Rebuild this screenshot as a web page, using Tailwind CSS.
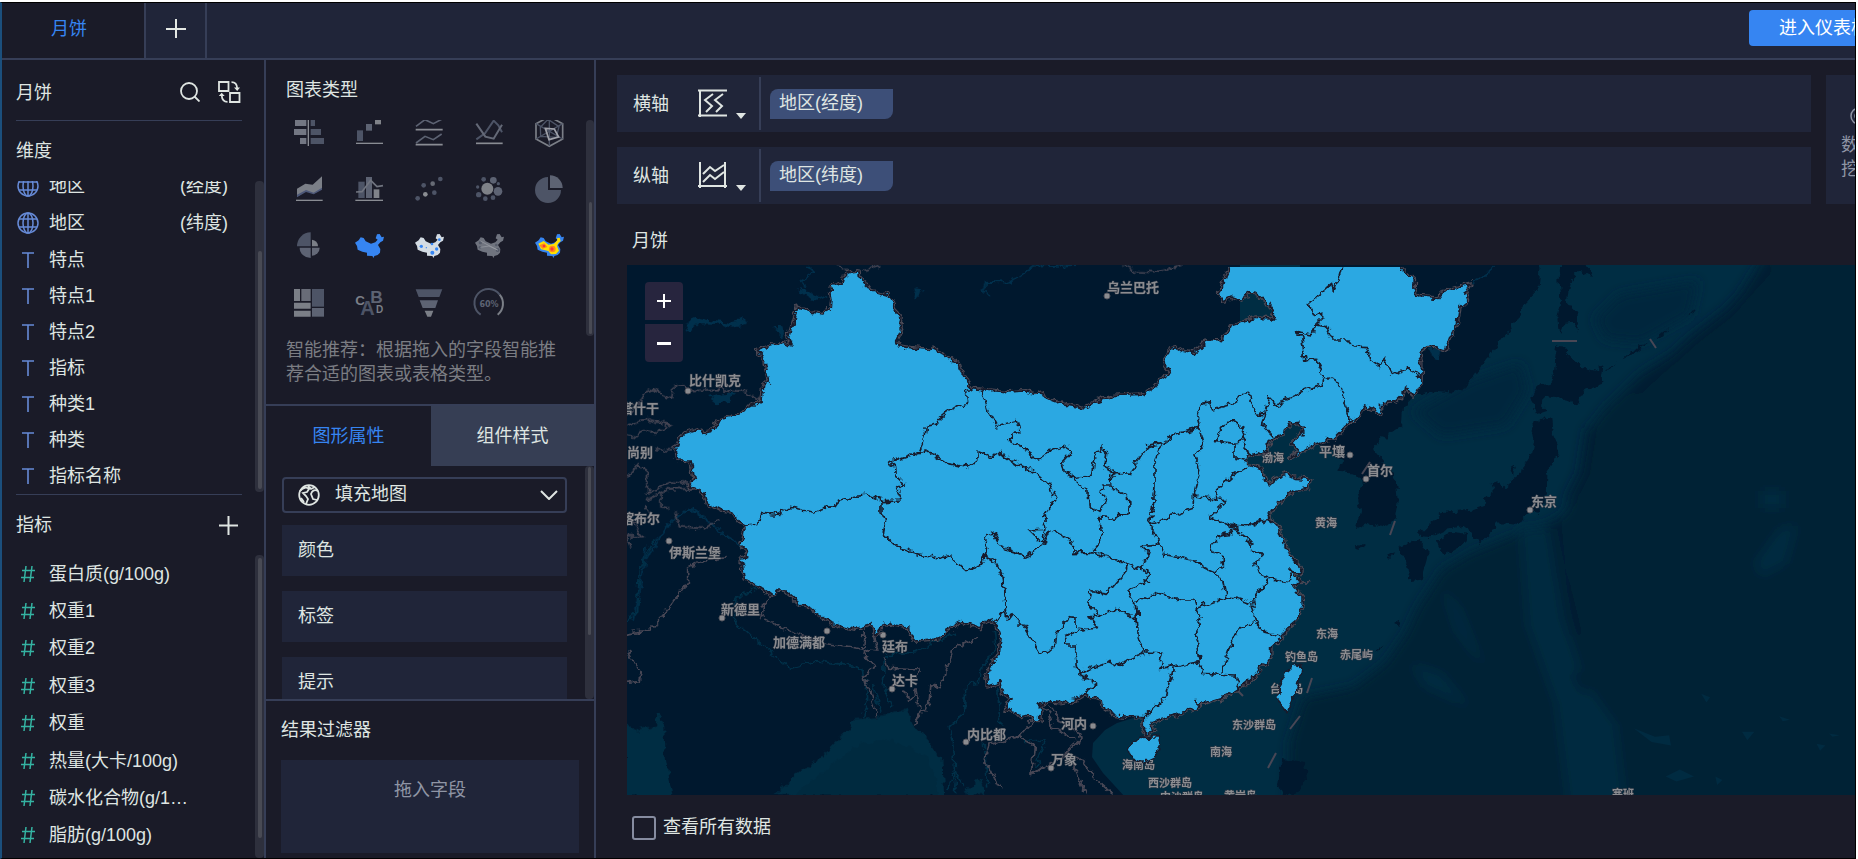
<!DOCTYPE html>
<html lang="zh-CN">
<head>
<meta charset="utf-8">
<title>月饼</title>
<script src="https://cdn.jsdelivr.net/npm/@tailwindcss/browser@4"></script>
</head>
<body class="h-screen overflow-hidden bg-white pt-[2px] pr-[2px] font-['Liberation_Sans','Noto_Sans_CJK_SC',sans-serif] text-[18px] leading-6 text-[#dfe5e2]">
<div class="flex h-full flex-col overflow-hidden border-y border-r border-l-2 border-black border-l-[#1b4f7c] bg-[#1a1b28]">

<header class="flex h-[57px] shrink-0 border-b-2 border-[#363e57] bg-[#202539]">
  <button class="w-[144px] shrink-0 border-r-2 border-[#363e57] bg-[#1a1b28] pr-2 pb-1 text-[#3685f2]">月饼</button>
  <button aria-label="新建" class="flex w-[61px] shrink-0 items-center justify-center border-r-2 border-[#363e57] pb-1">
    <svg class="size-5" viewBox="0 0 20 20" stroke="#e4e8e4" stroke-width="2"><path d="M0 10H20M10 0V19"/></svg>
  </button>
  <button class="mt-[7px] -mr-11 ml-auto h-9 w-[150px] shrink-0 rounded-sm bg-[#3685f2] text-white">进入仪表板</button>
</header>

<div class="flex min-h-0 flex-1">

<!-- Fields -->
<aside class="flex w-[264px] shrink-0 flex-col border-r-2 border-[#363e57]">
  <div class="mr-[22px] ml-[14px] flex h-[61px] shrink-0 items-center border-b border-[#363e57] pt-1">
    <h2 class="pt-px">月饼</h2>
    <button aria-label="搜索" class="ml-auto"><svg class="size-5" viewBox="0 0 20 20" fill="none" stroke="#dfe5e2" stroke-width="1.8"><circle cx="9" cy="9" r="8"/><path d="M14.5 14.5 19.5 19.5"/></svg></button>
    <button aria-label="切换" class="ml-[18px] mr-px"><svg class="h-[22px] w-[23px]" viewBox="0 0 23 22" fill="none" stroke="#dfe5e2" stroke-width="1.8"><path d="M1 1H10.500V10H1ZM12 12H21.500V21H12Z"/><path d="M13.500 1.200C17 1.200 19 3.500 19.200 7.500M9.500 20.800C6 20.800 4 18.500 3.700 14.500"/><path d="M16 6.500H22L19.200 10ZM.8 15H6.700L3.700 11.800Z" fill="#dfe5e2" stroke="none"/></svg></button>
  </div>
  <h3 class="flex h-[60px] shrink-0 items-center pl-[14px]">维度</h3>
  <div class="flex h-[313px] shrink-0 overflow-hidden">
    <ul class="-mt-[14px] w-[252px] pl-[15px]">
      <li class="flex h-[37px] items-center"><svg class="mr-[10px] size-[22px]" viewBox="0 0 22 22" fill="none" stroke="#668ad6" stroke-width="1.5"><circle cx="11" cy="11" r="10"/><ellipse cx="11" cy="11" rx="5" ry="10"/><path d="M11 1V21M2 7H20M2 15H20"/></svg>地区<span class="ml-auto pr-[26px]">(经度)</span></li>
      <li class="flex h-[37px] items-center"><svg class="mr-[10px] size-[22px]" viewBox="0 0 22 22" fill="none" stroke="#668ad6" stroke-width="1.5"><circle cx="11" cy="11" r="10"/><ellipse cx="11" cy="11" rx="5" ry="10"/><path d="M11 1V21M2 7H20M2 15H20"/></svg>地区<span class="ml-auto pr-[26px]">(纬度)</span></li>
      <li class="flex h-[37px] items-center"><svg class="mr-[10px] size-[22px]" viewBox="0 0 22 22" stroke="#668ad6" stroke-width="1.6"><path d="M5 4H17M11 4V19"/></svg>特点</li>
      <li class="flex h-9 items-center"><svg class="mr-[10px] size-[22px]" viewBox="0 0 22 22" stroke="#668ad6" stroke-width="1.6"><path d="M5 4H17M11 4V19"/></svg>特点1</li>
      <li class="flex h-9 items-center"><svg class="mr-[10px] size-[22px]" viewBox="0 0 22 22" stroke="#668ad6" stroke-width="1.6"><path d="M5 4H17M11 4V19"/></svg>特点2</li>
      <li class="flex h-9 items-center"><svg class="mr-[10px] size-[22px]" viewBox="0 0 22 22" stroke="#668ad6" stroke-width="1.6"><path d="M5 4H17M11 4V19"/></svg>指标</li>
      <li class="flex h-9 items-center"><svg class="mr-[10px] size-[22px]" viewBox="0 0 22 22" stroke="#668ad6" stroke-width="1.6"><path d="M5 4H17M11 4V19"/></svg>种类1</li>
      <li class="flex h-9 items-center"><svg class="mr-[10px] size-[22px]" viewBox="0 0 22 22" stroke="#668ad6" stroke-width="1.6"><path d="M5 4H17M11 4V19"/></svg>种类</li>
      <li class="flex h-9 items-center"><svg class="mr-[10px] size-[22px]" viewBox="0 0 22 22" stroke="#668ad6" stroke-width="1.6"><path d="M5 4H17M11 4V19"/></svg>指标名称</li>
    </ul>
    <div class="mb-0.5 ml-px flex-1 rounded-sm bg-[#2e303d] pt-[70px] pr-0.5 pb-[3px] pl-[3px]"><div class="h-full rounded bg-[#484a54]"></div></div>
  </div>
  <div class="mr-[22px] ml-[14px] flex h-[61px] shrink-0 items-center justify-between border-t border-[#363e57]">
    <h3>指标</h3>
    <button aria-label="添加指标" class="mr-1"><svg class="size-[19px]" viewBox="0 0 19 19" stroke="#dfe5e2" stroke-width="2"><path d="M0 9.500H19M9.500 0V19"/></svg></button>
  </div>
  <div class="flex min-h-0 flex-1">
    <ul class="flex w-[252px] flex-col pb-1 pl-[15px]">
      <li class="flex flex-1 items-center"><svg class="mr-[10px] size-[22px]" viewBox="0 0 22 22" stroke="#34b3a2" stroke-width="1.500"><path d="M5 7.500H18M4 14.500H17M9 3 7 19M15 3 13 19"/></svg>蛋白质(g/100g)</li>
      <li class="flex flex-1 items-center"><svg class="mr-[10px] size-[22px]" viewBox="0 0 22 22" stroke="#34b3a2" stroke-width="1.500"><path d="M5 7.500H18M4 14.500H17M9 3 7 19M15 3 13 19"/></svg>权重1</li>
      <li class="flex flex-1 items-center"><svg class="mr-[10px] size-[22px]" viewBox="0 0 22 22" stroke="#34b3a2" stroke-width="1.500"><path d="M5 7.500H18M4 14.500H17M9 3 7 19M15 3 13 19"/></svg>权重2</li>
      <li class="flex flex-1 items-center"><svg class="mr-[10px] size-[22px]" viewBox="0 0 22 22" stroke="#34b3a2" stroke-width="1.500"><path d="M5 7.500H18M4 14.500H17M9 3 7 19M15 3 13 19"/></svg>权重3</li>
      <li class="flex flex-1 items-center"><svg class="mr-[10px] size-[22px]" viewBox="0 0 22 22" stroke="#34b3a2" stroke-width="1.500"><path d="M5 7.500H18M4 14.500H17M9 3 7 19M15 3 13 19"/></svg>权重</li>
      <li class="flex flex-1 items-center"><svg class="mr-[10px] size-[22px]" viewBox="0 0 22 22" stroke="#34b3a2" stroke-width="1.500"><path d="M5 7.500H18M4 14.500H17M9 3 7 19M15 3 13 19"/></svg>热量(大卡/100g)</li>
      <li class="flex flex-1 items-center"><svg class="mr-[10px] size-[22px]" viewBox="0 0 22 22" stroke="#34b3a2" stroke-width="1.500"><path d="M5 7.500H18M4 14.500H17M9 3 7 19M15 3 13 19"/></svg>碳水化合物(g/1…</li>
      <li class="flex flex-1 items-center"><svg class="mr-[10px] size-[22px]" viewBox="0 0 22 22" stroke="#34b3a2" stroke-width="1.500"><path d="M5 7.500H18M4 14.500H17M9 3 7 19M15 3 13 19"/></svg>脂肪(g/100g)</li>
    </ul>
    <div class="ml-px flex-1 rounded-sm bg-[#2e303d] pt-[3px] pr-0.5 pb-5 pl-[3px]"><div class="h-full rounded bg-[#484a54]"></div></div>
  </div>
</aside>

<!-- Chart settings -->
<section class="flex w-[330px] shrink-0 flex-col border-r-2 border-[#363e57]">
  <h2 class="flex h-[60px] shrink-0 items-center pl-5">图表类型</h2>
  <div class="flex h-[216px] shrink-0 overflow-hidden">
    <div class="-mt-1.5 ml-[13px] grid w-[300px] shrink-0 auto-rows-[57px] grid-cols-5">
      <button aria-label="对比柱状图" class="flex justify-center"><svg class="size-9" viewBox="78 162 108 108" fill="#5a6070"><path d="M90 180H124V198H90ZM87 207H124V225H87ZM105 234H124V252H105Z" fill="#737783"/><path d="M137 180H150V198H137ZM137 207H168V225H137ZM137 234H177V252H137Z" fill="#4d5466"/><path d="M128 174H132V258H128Z" fill="#898c93"/></svg></button>
      <button aria-label="瀑布图" class="flex justify-center"><svg class="size-9" viewBox="258 162 108 108"><path d="M276 211H294V243H276Z" fill="#4d5466"/><path d="M303 192H321V212H303Z" fill="#5d6373"/><path d="M330 172H348V193H330Z" fill="#808389"/><path d="M273 248H354V252H273Z" fill="#898c93"/></svg></button>
      <button aria-label="折线图" class="flex justify-center"><svg class="size-9" viewBox="438 162 108 108" fill="none" stroke-width="5"><path d="M453 199 480 179 505 191 530 178M453 249 480 229 505 239 530 222" stroke="#5d6373"/><path d="M452 209H533M452 254H533" stroke="#898c93"/></svg></button>
      <button aria-label="多系列折线图" class="flex justify-center"><svg class="size-9" viewBox="618 162 108 108" fill="none" stroke-width="6"><path d="M634 238 660 220 686 182 700 196 711 217" stroke="#4d5466"/><path d="M634 191 661 230 686 236 711 194" stroke="#646977"/><path d="M633 250H713" stroke="#898c93" stroke-width="5"/></svg></button>
      <button aria-label="雷达图" class="flex justify-center"><svg class="size-9" viewBox="798 162 108 108" fill="none" stroke-width="4"><path d="M853 170 893 191V237L853 259 813 237V191Z" stroke="#7b7f87" stroke-width="5"/><path d="M826 202 849 178 882 200 874 232 827 229ZM853 180V258M813 237 893 191M813 191 893 237" stroke="#4d5466"/><path d="M841 205 868 207 881 231 852 239Z" stroke="#a0a2aa" stroke-width="5"/></svg></button>
      <button aria-label="面积图" class="flex justify-center"><svg class="size-9" viewBox="78 333 108 108"><path d="M96 386 121 371 143 374 171 349V387L146 401 123 393 96 410Z" fill="#7b7f87"/><path d="M96 404 123 390 146 398 171 383V389L146 403 123 396 96 412Z" fill="#4d5878"/><path d="M93 419H173V423H93Z" fill="#898c93"/></svg></button>
      <button aria-label="组合图" class="flex justify-center"><svg class="size-9" viewBox="258 333 108 108"><path d="M280 365H299V414H280Z" fill="#4d5466"/><path d="M303 351H321V414H303Z" fill="#5d6373"/><path d="M326 388H343V414H326Z" fill="#808389"/><path d="M273 396 291 395 317 361 336 380 354 377" fill="none" stroke="#70747f" stroke-width="5"/><path d="M271 419H354V423H271Z" fill="#898c93"/></svg></button>
      <button aria-label="散点图" class="flex justify-center"><svg class="size-9" viewBox="438 333 108 108" fill="#4d5466"><circle cx="526" cy="357" r="7"/><circle cx="476" cy="376" r="7"/><circle cx="508" cy="398" r="7"/><circle cx="458" cy="415" r="7"/><circle cx="503" cy="371" r="7" fill="#676b75"/><circle cx="481" cy="403" r="7" fill="#8a8d92"/></svg></button>
      <button aria-label="气泡图" class="flex justify-center"><svg class="size-9" viewBox="618 333 108 108" fill="#4d5466"><circle cx="667" cy="386" r="18" fill="#7e8187"/><circle cx="685" cy="361" r="10" fill="#5d6373"/><circle cx="699" cy="394" r="13" fill="#5d6373"/><circle cx="656" cy="358" r="7"/><circle cx="641" cy="404" r="8"/><circle cx="638" cy="381" r="5"/><circle cx="661" cy="416" r="7"/><circle cx="684" cy="413" r="7"/><circle cx="700" cy="371" r="5"/></svg></button>
      <button aria-label="饼图" class="flex justify-center"><svg class="size-9" viewBox="798 333 108 108"><path d="M849 351V390H888A39 39 0 1 1 849 351Z" fill="#4d5466"/><path d="M855 346A38 38 0 0 1 893 384H855Z" fill="#5d6373"/></svg></button>
      <button aria-label="玫瑰图" class="flex justify-center"><svg class="size-9" viewBox="78 504 108 108"><path d="M137 517V559H96A41 42 0 0 1 137 517Z" fill="#4d5466"/><path d="M104 563H137V594A33 31 0 0 1 104 563Z" fill="#5d6373"/><path d="M141 539A20 20 0 0 1 159 559H141Z" fill="#7b7f87"/><path d="M141 563H164A23 24 0 0 1 141 587Z" fill="#646977"/></svg></button>
      <button aria-label="填充地图" class="flex justify-center"><svg class="size-9" viewBox="258 504 108 108"><defs><path id="cn" d="M270 548 281 541 287 532 296 534 302 544 318 551 331 547 338 539 332 535 336 523 344 522 350 532 357 530 354 542 346 547 339 555 346 567 345 578 338 585 328 588 326 594 322 588 306 587 306 578 292 575 278 569 276 558Z"/></defs><use href="#cn" fill="#3685f2"/></svg></button>
      <button aria-label="点地图" class="flex justify-center"><svg class="size-9" viewBox="438 504 108 108"><use href="#cn" x="180" fill="#d4dce4"/><g fill="#3685f2"><circle cx="523" cy="539" r="4"/><circle cx="469" cy="559" r="5"/><circle cx="501" cy="552" r="4"/><circle cx="515" cy="567" r="5"/><circle cx="502" cy="578" r="6"/><circle cx="484" cy="563" r="2"/></g></svg></button>
      <button aria-label="流向地图" class="flex justify-center"><svg class="size-9" viewBox="618 504 108 108"><use href="#cn" x="360" fill="#70747f"/><g fill="#555b6a"><circle cx="646" cy="548" r="5"/><circle cx="645" cy="562" r="4"/><circle cx="698" cy="570" r="6"/><circle cx="694" cy="555" r="4"/></g><path d="M646 543 698 570M646 562 672 558 698 570" fill="none" stroke="#9da0a8" stroke-width="2"/></svg></button>
      <button aria-label="热力地图" class="flex justify-center"><svg class="size-9" viewBox="798 504 108 108"><use href="#cn" x="540" fill="#3685f2"/><path d="M820 551 836 543 850 554 866 552 877 541 876 535 884 533 887 543 880 549 876 558 882 572 873 582 858 583 850 573 828 568Z" fill="#ffe000"/><circle cx="862" cy="567" r="10" fill="#ff8a1c"/><path d="M822 556 838 550 847 561 833 566Z" fill="#ff8a1c"/><circle cx="861" cy="567" r="5" fill="#f5353c"/><circle cx="837" cy="558" r="4" fill="#f5353c"/></svg></button>
      <button aria-label="矩形树图" class="flex justify-center"><svg class="size-9" viewBox="78 675 108 108"><path d="M87 687H105V723H87ZM87 728H137V746H87ZM87 752H137V770H87Z" fill="#7b7f87"/><path d="M109 687H137V723H109Z" fill="#686c78"/><path d="M141 687H177V740H141Z" fill="#4d5466"/><path d="M141 744H177V770H141Z" fill="#5d6373"/></svg></button>
      <button aria-label="词云" class="flex justify-center"><svg class="size-9" viewBox="258 675 108 108" font-family="Liberation Sans" font-weight="bold"><text x="316" y="729" font-size="52" fill="#5d6373">B</text><text x="286" y="766" font-size="60" fill="#4d5466">A</text><text x="271" y="734" font-size="40" fill="#7b7f87">C</text><text x="333" y="759" font-size="30" fill="#7b7f87">D</text></svg></button>
      <button aria-label="漏斗图" class="flex justify-center"><svg class="size-9" viewBox="438 675 108 108"><path d="M452 688H532L523 711H461Z" fill="#4d5466"/><path d="M464 721H519L511 744H473Z" fill="#5d6373"/><path d="M479 752H505L498 770H487Z" fill="#7b7f87"/></svg></button>
      <button aria-label="仪表盘" class="flex justify-center"><svg class="size-9" viewBox="618 675 108 108" fill="none" stroke-width="6"><path d="M647 764A42 42 0 1 1 704 704" stroke="#4d5466"/><path d="M704 704A42 42 0 0 1 698 764" stroke="#7b7f87"/><text x="672" y="741" font-size="24" font-weight="bold" text-anchor="middle" stroke="none" fill="#5d6373" font-family="DejaVu Sans">60%</text></svg></button>
    </div>
    <div class="ml-[7px] flex-1 rounded-sm bg-[#2e303d] pt-[82px] pr-0.5 pb-0.5 pl-[3px]"><div class="h-full rounded bg-[#484a54]"></div></div>
  </div>
  <p class="h-[68px] w-[294px] shrink-0 pt-0.5 pl-5 text-[#7b7d83]">智能推荐：根据拖入的字段智能推荐合适的图表或表格类型。</p>

  <div class="flex h-[62px] shrink-0 border-t-2 border-[#363e57]">
    <button class="w-[165px] text-[#3685f2]">图形属性</button>
    <button class="flex-1 bg-[#363e54]">组件样式</button>
  </div>
  <div class="flex min-h-0 flex-1 overflow-hidden">
    <div class="mt-[11px] ml-4 flex w-[285px] shrink-0 flex-col">
      <div class="mb-3 flex h-9 shrink-0 items-center rounded-sm border-2 border-[#363e57] px-[7px]">
        <svg class="ml-[7px] size-[22px]" viewBox="0 0 22 22" fill="none" stroke="#dfe5e2" stroke-width="1.800"><circle cx="11" cy="11" r="9.800"/><path d="M2 7C5 3 9 3 11 5L9 8 5 9 8 12 10 15 8 20M20 7C16 5 14 7 13 10L15 15 19 16M10 2 13 5 17 3M3 14 6 18"/></svg>
        <select aria-label="图表类型" class="ml-[15px] flex-1 appearance-none bg-transparent pb-0.5 outline-none"><option>填充地图</option></select>
        <svg class="h-[10px] w-[18px]" viewBox="0 0 18 10" fill="none" stroke="#dfe5e2" stroke-width="2"><path d="M1 1 9 9 17 1"/></svg>
      </div>
      <button class="mb-[15px] h-[51px] shrink-0 bg-[#202539] pb-0.5 pl-4 text-left">颜色</button>
      <button class="mb-[15px] h-[51px] shrink-0 bg-[#202539] pb-0.5 pl-4 text-left">标签</button>
      <button class="h-[51px] shrink-0 bg-[#202539] pb-0.5 pl-4 text-left">提示</button>
    </div>
    <div class="ml-[18px] flex-1 rounded-sm bg-[#2e303d] pt-px pr-[3px] pb-16 pl-[3px]"><div class="h-full rounded bg-[#484a54]"></div></div>
  </div>
  <div class="shrink-0 border-t-2 border-[#363e57] px-[15px] pb-[5px]">
    <h2 class="flex h-[59px] items-center pb-0.5">结果过滤器</h2>
    <div class="h-[93px] bg-[#202539] pt-[18px] text-center text-[#8f95a5]">拖入字段</div>
  </div>
</section>

<!-- Preview -->
<main class="flex min-w-0 flex-1 flex-col">
  <div class="mt-[15px] ml-[21px] flex shrink-0 gap-[15px]">
    <div class="flex flex-1 flex-col gap-[15px]">
      <div class="flex h-[57px] items-center bg-[#202539] pl-4">
        <span>横轴</span>
        <button aria-label="横轴类型" class="ml-7 flex items-end gap-[9px]"><svg class="size-[30px]" viewBox="0 0 30 30" fill="none" stroke="#dfe5e2" stroke-width="2"><path d="M3 1V28M1 1.500H30M1 26.500H30M16 5 8 11 15 17 9 23M26 5 18 11 25 17 19 23"/></svg><svg class="h-1.5 w-2.5" viewBox="0 0 10 6" fill="#dfe5e2"><path d="M0 0H10L5 6Z"/></svg></button>
        <div class="ml-[13px] h-[53px] w-0.5 bg-[#363e57]"></div>
        <span class="ml-[9px] h-[30px] w-[123px] rounded-tl-lg rounded-br-lg bg-[#3d4f78] pt-0.5 pl-[9px]">地区(经度)</span>
      </div>
      <div class="flex h-[57px] items-center bg-[#202539] pl-4">
        <span>纵轴</span>
        <button aria-label="纵轴类型" class="ml-7 flex items-end gap-[9px]"><svg class="size-[30px]" viewBox="0 0 30 30" fill="none" stroke="#dfe5e2" stroke-width="2"><path d="M3 1V27M28 1V27M1 25H30M6 13 13 6 18 10 27 4M6 21 13 14 18 18 27 11"/></svg><svg class="h-1.5 w-2.5" viewBox="0 0 10 6" fill="#dfe5e2"><path d="M0 0H10L5 6Z"/></svg></button>
        <div class="ml-[13px] h-[53px] w-0.5 bg-[#363e57]"></div>
        <span class="ml-[9px] h-[30px] w-[123px] rounded-tl-lg rounded-br-lg bg-[#3d4f78] pt-0.5 pl-[9px]">地区(纬度)</span>
      </div>
    </div>
    <button class="-mr-[37px] flex w-[66px] shrink-0 flex-col items-center justify-center gap-2 bg-[#202539] px-[15px] pt-2 text-[#8f95a5]">
      <svg class="size-[18px] shrink-0" viewBox="0 0 18 18" fill="none" stroke="#8f95a5" stroke-width="1.500"><circle cx="9" cy="9" r="8"/><circle cx="9" cy="9" r="4"/></svg>
      <span class="w-9">数据挖掘</span>
    </button>
  </div>

  <h2 class="mt-[25px] ml-9 h-9 shrink-0">月饼</h2>

  <div class="relative ml-[31px] min-h-0 flex-1 overflow-hidden bg-[#00182e]">
    <svg class="h-full w-full" viewBox="627 265 1228 530" preserveAspectRatio="xMinYMin slice" role="img" aria-label="中国填充地图">
      <defs>
        <filter id="coast" filterUnits="userSpaceOnUse" x="600" y="240" width="1300" height="580" color-interpolation-filters="sRGB"><feTurbulence type="fractalNoise" baseFrequency=".13" numOctaves="3" seed="4"/><feDisplacementMap in="SourceGraphic" scale="9" xChannelSelector="R" yChannelSelector="G"/></filter>
        <filter id="soft" filterUnits="userSpaceOnUse" x="-100" y="-100" width="1900" height="1900"><feGaussianBlur stdDeviation="16"/></filter>
        <clipPath id="frame"><rect x="627" y="267" width="1240" height="530"/></clipPath>
      </defs>
      <!-- Seas and depth tones -->
      <path d="M1240 400V500L1143 715 1117 723 1105 730 1093 743 1092 757 1103 773 1125 797H1900V260H1240Z" fill="#002d43"/>
      <g transform="translate(1300 260) scale(.355 .3443)">
        <g filter="url(#soft)">
          <path d="M1340-60 1200 160 1080 250 960 330 860 430 815 490 800 590 775 680 740 740 690 770 600 800 480 850 400 900 330 1010 300 1080 240 1170 150 1240 10 1270-30 1400-40 1700H1800V-60Z" fill="#002235"/>
          <path d="M620 780 700 780 720 900 740 1040 800 1220 890 1350 930 1700H770L720 1290 640 1060Z" fill="#00293f"/>
          <path d="M320 440 480 350 620 300 640 380 580 480 400 510Z" fill="#00273c"/>
          <path d="M830 170 900 100 1120 60 1100 160 960 240 860 230Z" fill="#00273c"/>
          <path d="M1280 880 1350 780 1400 770 1370 880 1300 920ZM1300 670H1360V720H1300ZM310 1170 400 1200 480 1300 350 1240ZM400 950 450 1010 520 1190 440 1080Z" fill="#002a40"/>
          <path d="M1330 15 1210 150 1110 230 940 390M820 490 800 620 760 700M725 760 740 900 785 1090M780 1200 810 1250" stroke="#001c31" stroke-width="26" fill="none"/>
        </g>
        <path d="M1130 1260 1155 1270 1145 1285ZM940 1360 1000 1385 1040 1380 1045 1410 990 1400ZM1245 1370 1280 1370 1260 1395ZM1030 1500 1070 1480 1110 1500 1060 1515ZM1455 1405 1480 1410 1465 1425ZM1350 1325 1380 1335 1360 1340ZM1490 1375 1520 1380 1500 1385ZM1170 1500 1190 1510 1175 1525Z" fill="#002b41" filter="url(#none)"/>
      </g>
      <g filter="url(#coast)">
        <!-- Northeast Asia and Japan -->
        <g transform="translate(1300 260) scale(.355 .3443)" fill="#00182e">
          <path d="M0 0H680L672 80 635 120 600 190 560 240 510 310 470 365 430 385 380 380 345 390 320 400 290 430 287 480 230 520 205 550 240 590 272 640 278 700 270 750 235 775 200 765 158 785 172 730 160 680 180 650 150 620 105 615 120 580 60 540 0 500Z"/>
          <path d="M735 0H800L825 50 790 30 760 60 752 120 785 160 785 205 765 180 745 182 730 215 725 170 735 120 728 60Z"/>
          <path d="M725 240 760 280 790 310 830 322 855 308 850 340 855 358 800 380 775 422 740 400 690 395 675 410 695 435 665 445 652 400 670 365 700 360 715 330 720 280Z"/>
          <path d="M680 460 708 462 712 500 730 540 715 590 697 620 695 680 670 740 640 735 615 770 580 765 555 765 540 790 505 825 480 790 470 770 420 780 370 805 330 800 360 770 400 735 480 728 515 715 520 690 545 670 540 650 560 645 575 660 620 620 650 570 660 520 652 480Z"/>
          <path d="M385 820 430 790 470 795 460 825 405 858ZM280 830 330 812 365 850 345 925 310 930 300 880 285 860ZM158 830 185 825 175 840 160 840ZM245 860 265 845 258 862ZM590 610 605 600 600 625ZM855 330 890 295 870 320ZM910 290 950 250 980 240 950 265ZM1005 230 1040 200 1020 225ZM1090 165 1110 140 1105 155ZM265 1060 285 1045 275 1065ZM210 1140 235 1120 225 1135Z"/>
        </g>
        <!-- Luzon and small islands -->
        <path d="M1282 759 1305 762 1307 780 1300 790 1284 797 1278 785ZM1355 544 1366 545 1360 550Z" fill="#00182e"/>
        <!-- Bay of Bengal, Arabian Sea, Gulf of Martaban -->
        <g transform="translate(626 540) scale(.3333)">
          <path d="M445 765 500 715 580 655 640 595 670 565 680 538 750 532 840 505 860 550 920 620 950 670 955 770Z" fill="#002d43"/>
          <path d="M600 690 700 610 800 600 900 650 930 720 935 770H500Z" fill="#002a3f"/>
          <path d="M0 550 40 570 90 560 100 515 115 560 120 660 140 770H0ZM1010 765 1060 715 1080 765Z" fill="#002d43"/>
        </g>
        <!-- Lakes and rivers -->
        <g transform="translate(626 260) scale(.3333)" fill="#00304c">
          <path d="M175 215 190 180 210 172 250 180 310 188 365 175 360 195 320 203 270 192 220 190 190 218ZM450 195 465 195 480 225 465 232 450 215ZM250 412 290 400 330 398 305 425 275 430ZM512 90 545 95 575 115 570 122 545 112ZM862 105 870 85 892 88 885 103 868 120ZM2410 265 2450 270 2435 300 2420 295Z"/>
          <path d="M570 120 600 107M535 90 530 60 565 38 540 15M1090 105 1070 90 1080 65 1150 68 1222 20 1350 15M2540 70 2590 40 2600 15M60 900 120 800 190 745 240 780 360 870M60 860 40 1000 20 1080" fill="none" stroke="#00304c" stroke-width="6"/>
        </g>
        <g transform="translate(626 540) scale(.3333)" fill="none" stroke="#003048" stroke-width="5">
          <path d="M0 240 35 210 40 90 85 0M395 145 330 175 325 245 400 310 495 385 570 362 700 382 720 425 725 480 710 530M740 435 765 515M775 350 772 440 795 500M780 345 870 335 990 275M1105 275 1110 320 1065 390 1060 430 1020 435 1015 520 970 560 985 640 985 700 965 750M985 690 1020 740M990 700 985 760M1115 440 1122 560M1075 610 1085 740M1190 605 1260 600 1230 680"/>
        </g>
        <!-- Foreign borders -->
        <g fill="none" stroke="#484755" stroke-width="5">
          <g transform="translate(626 260) scale(.3333)">
            <path d="M0 470 45 420 55 400 80 392 140 415 145 380 170 375 190 392 280 388 360 395 405 422M0 500 40 485 70 480 130 495 90 520 50 512 30 530 0 525M85 572H148M0 660 40 612 60 630 65 700 140 662 190 675M60 720 120 690 220 685M55 735 80 770 20 790 50 830 0 830 15 860M105 700 105 740 130 745M150 760 160 800 230 805 280 780M660 30 640 15M712 35 760 16M1490 15 1530 35 1590 38 1670 15"/>
          </g>
          <g transform="translate(626 540) scale(.3333)">
            <path d="M0 280 70 270 125 210 185 125 185 85 240 60 300 50M5 330 45 400 40 425 0 430M440 165 410 195 405 230 500 280 600 310 710 330 715 270M745 285 755 330 720 325 715 350 745 380 710 410 735 450 752 530M775 345 785 385 880 390 875 410M830 445 850 480 870 450 885 520 870 555 885 515 905 515 915 435 945 440 980 330 1060 290M1225 540 1180 590 1090 610 1075 660 1125 750M1180 590 1225 620 1215 705 1280 670 1350 620M1240 500 1270 520 1280 560 1350 600"/>
          </g>
          <g transform="translate(1000 530) scale(.3333)">
            <path d="M150 530 185 580 235 605 240 630 205 660 210 680 250 690 290 750 340 795M210 680 240 750 260 795M100 645 95 735 130 710M870 162 935 158"/>
          </g>
        </g>
      </g>
      <!-- Maritime boundary dashes -->
      <path d="M1552 341H1577M1650 339 1656 348M1395 521 1390 535M1362 474 1370 462M1312 678 1307 693M1300 716 1290 729M1276 753 1268 768M1235 688 1243 696" stroke="#484755" stroke-width="2"/>
      <!-- Map labels -->
      <g font-family="Noto Sans CJK SC, sans-serif" font-weight="700" fill="#8b8c90" stroke="#2a3442" stroke-width="1" paint-order="stroke">
        <g font-size="13">
          <text x="1107" y="292">乌兰巴托</text><text x="689" y="385">比什凯克</text><text x="620" y="413">塔什干</text><text x="614" y="457">杜尚别</text><text x="621" y="523">喀布尔</text><text x="669" y="557">伊斯兰堡</text><text x="721" y="614">新德里</text><text x="773" y="647">加德满都</text><text x="882" y="651">廷布</text><text x="892" y="685">达卡</text><text x="967" y="739">内比都</text><text x="1061" y="728">河内</text><text x="1051" y="764">万象</text><text x="1319" y="456">平壤</text><text x="1367" y="475">首尔</text><text x="1531" y="506">东京</text>
        </g>
        <g font-size="11">
          <text x="1262" y="462">渤海</text><text x="1315" y="527">黄海</text><text x="1316" y="638">东海</text><text x="1285" y="661">钓鱼岛</text><text x="1340" y="659">赤尾屿</text><text x="1270" y="693">台湾岛</text><text x="1232" y="729">东沙群岛</text><text x="1210" y="756">南海</text><text x="1122" y="769">海南岛</text><text x="1148" y="787">西沙群岛</text><text x="1160" y="801">中沙群岛</text><text x="1224" y="800">黄岩岛</text><text x="1612" y="798">塞班</text>
        </g>
      </g>
      <g fill="#8b8c90" stroke="#55565e"><circle cx="1107" cy="296" r="3"/><circle cx="688" cy="391" r="3"/><circle cx="669" cy="541" r="3"/><circle cx="722" cy="618" r="3"/><circle cx="827" cy="631" r="3"/><circle cx="883" cy="635" r="3"/><circle cx="892" cy="689" r="3"/><circle cx="966" cy="742" r="3"/><circle cx="1093" cy="726" r="3"/><circle cx="1051" cy="768" r="3"/><circle cx="1350" cy="455" r="3"/><circle cx="1366" cy="479" r="3"/><circle cx="1530" cy="510" r="3"/></g>
      <!-- China -->
      <g clip-path="url(#frame)"><g filter="url(#coast)" stroke-linejoin="round">
        <defs><path id="china" d="M662 37 698 33 700 50 712 66 730 80 738 92 760 98 785 105 800 125 808 150 825 170 820 200 825 215 812 240 822 258 850 263 885 266 920 268 945 280 975 303 995 308 1000 325 1012 345 1020 365 1033 385 1060 388 1100 392 1150 396 1197 393 1242 402 1277 420 1317 435 1350 440 1367 447 1412 425 1457 407 1547 403 1577 388 1602 360 1637 338 1622 320 1619 300 1632 268 1652 263 1667 273 1702 280 1722 265 1742 243 1782 242 1802 225 1814 200 1852 187 1882 175 1944 177 1937 150 1917 120 1892 100 1864 98 1847 122 1822 108 1790 122 1777 95 1790 75 1797 50 1812 20 1812-10H2322V20L2344 42 2365 55 2364 85 2377 110 2437 115 2452 95 2482 83 2534 73 2517 100 2524 120 2502 140 2494 190 2472 230 2458 270 2412 255 2380 275 2387 310 2385 350 2384 380 2362 410 2337 378 2332 402 2307 425 2267 428 2265 460 2217 440 2192 475 2162 495 2122 535 2082 545 2047 560 2012 585 1992 592 2015 572 1999 550 2022 525 2035 505 2017 487 1992 490 1972 510 1970 525 1942 535 1925 550 1922 575 1887 585 1867 575 1860 600 1872 615 1907 628 1917 645 1909 660 1932 675 1952 655 1982 642 2007 655 2054 658 2047 685 2002 692 1972 720 1937 750 1922 775 1960 805 1972 840 1987 885 2007 905 2025 925 2022 940 1995 930 2022 965 1997 975 2012 995 2025 1010 2027 1040 2015 1075 1982 1105 1967 1135 1937 1155 1937 1195 1907 1215 1887 1245 1837 1290 1802 1310 1742 1330 1710 1325 1722 1340 1682 1355 1622 1370 1577 1385 1570 1400 1582 1415 1562 1425 1552 1400 1552 1370 1512 1370 1462 1365 1437 1350 1432 1320 1392 1310 1377 1300 1347 1320 1302 1328 1272 1325 1240 1335 1242 1385 1220 1365 1182 1375 1172 1355 1142 1350 1155 1310 1130 1300 1125 1265 1085 1278 1080 1245 1100 1210 1120 1185 1125 1130 1112 1095 1080 1075 1060 1102 1010 1085 960 1112 930 1140 865 1143 845 1102 775 1090 750 1125 738 1093 690 1108 640 1095 600 1080 550 1040 520 1030 475 990 455 990 440 1005 400 975 355 960 350 920 340 895 368 890 345 850 355 805 320 755 285 752 245 730 235 695 185 675 205 660 195 603 160 603 148 568 165 525 225 505 232 517 260 512 275 480 320 470 405 425 410 380 428 365 410 285 392 272 435 258 470 247 498 255 487 235 515 143 550 155 590 162 615 150 618 120 613 80 655 67Z"/></defs>
        <g transform="translate(626 260) scale(.3333)" fill="#2ba8e2">
          <use href="#china" stroke="#4b4955" stroke-width="12"/>
          <use href="#china" stroke="#171b2c" stroke-width="5"/>
        </g>
        <g fill="#2ba8e2" stroke="#171b2c" stroke-width="5" transform="translate(1000 530) scale(.3333)">
          <path d="M385 660 395 640 430 622 475 620 480 640 465 680 430 697 395 690ZM885 403 903 408 900 440 885 490 858 545 833 515 835 470 860 425Z"/>
        </g>
        <g fill="none" stroke="#171b2c" stroke-width="5">
          <path transform="translate(626 260) scale(.3333)" d="M1033 385 1022 400 1025 430 990 440 960 460 938 480 932 495 898 502 890 550 877 578 790 608 805 620 808 645 835 675 815 690 828 720 768 722 725 705 680 710 638 720 625 740 600 742 560 757 495 742 460 763 410 757 390 798 355 803M768 722V760L778 790 772 822 815 860 870 880 940 895 965 885 1000 915 1020 932 1070 915 1075 885 1085 850 1075 830 1100 815 1115 840 1130 870 1165 880 1200 895M1075 885 1110 910 1130 950 1138 1045 1105 1085M877 578 905 573 935 592 960 610 1028 622 1055 600 1057 570 1095 590 1120 578 1160 605 1172 620M1065 385 1088 455 1112 498 1175 482 1180 505 1150 537"/>
          <path transform="translate(1000 260) scale(.3333)" d="M28 537 75 570 115 597 150 573 205 560 213 580 185 610 190 635 225 657M0 577 50 610 110 640 145 670 168 718 130 770 135 805 125 860 75 890 35 875 0 850M130 808 85 810 130 855 140 825 165 812 215 840 220 880 270 880 305 840 300 770 345 775 388 755 385 710 335 680V640M225 657 275 645 280 600 305 563 320 580 315 620 345 637 335 675 305 675 300 700 320 720 300 760 265 740 260 690 225 657M345 637 395 640 405 610 440 560 485 550 465 610V680L460 740 450 795M485 550 530 520 600 505 590 465 605 430 630 425 635 450 705 430 715 405 745 400 765 460 795 465 805 410 835 440 850 420 920 390 965 375 972 350 1015 370 1035 430 1052 485M795 465 785 490 820 530M972 350 945 295 915 305 905 230 890 215 940 222 945 195M1030 0 1015 60 1000 90 995 70 925 130 945 170 965 160V175L945 195 980 200 1000 240 1045 240 1060 258 1100 260 1110 295 1140 320 1150 295 1175 345 1225 325 1262 352M600 505 612 550 585 590 598 640 580 705V745L520 765 450 795 480 855 420 860 445 880 425 930M695 480 725 500 735 525 715 550 650 545 655 515 675 490ZM735 525 730 555 748 575M705 550V595L738 603M745 620 700 645 650 690V720L580 708M650 720 680 722 630 770 690 795 740 800 800 775M690 795 695 820 660 825 635 860 640 875 670 890V920L650 940M690 795 740 830 760 875 790 880"/>
          <path transform="translate(1000 530) scale(.3333)" d="M480 45 500 75 580 90 615 115 650 130 670 160 678 200 715 205 755 218 810 145 775 130 765 100 790 70M220 70 280 68 375 98 425 118 445 125V155L380 175 410 225 408 275 385 250 345 235 300 260 260 215 270 182 325 190 375 130 380 98M410 215 465 190 540 210 582 210 590 235 645 215 678 203M810 145 860 155 875 130 900 125M755 218 767 272 715 295 690 355 665 425M767 272 790 305 845 318M590 235 600 265 585 310 598 395 610 430 705 435 718 478M598 395 525 410 480 415 490 370 430 365 415 325 410 225M5 130 20 270 35 250 70 290 120 370 165 350 170 310 205 260 225 262V290L260 295 295 290 270 260 300 260M255 300 195 320 200 345 225 345 235 430 325 395 350 405 430 370M235 430 290 465 255 490M520 415 495 500 435 560"/>
        </g>
      </g></g>
    </svg>
    <!-- Zoom controls floating over the map -->
    <div class="absolute top-[17px] left-[18px] flex flex-col gap-1">
      <button aria-label="放大" class="flex size-[38px] items-center justify-center rounded-t bg-[#27253e]"><svg class="size-[14px]" viewBox="0 0 14 14" stroke="#fff" stroke-width="2"><path d="M0 7H14M7 0V14"/></svg></button>
      <button aria-label="缩小" class="flex size-[38px] items-center justify-center rounded-b bg-[#27253e]"><svg class="size-[14px]" viewBox="0 0 14 14" stroke="#fff" stroke-width="3"><path d="M0 7.500H14"/></svg></button>
    </div>
  </div>

  <div class="ml-9 flex h-[63px] shrink-0 items-center gap-[7px]">
    <input id="all" type="checkbox" class="mt-0.5 size-6 appearance-none rounded-[3px] border-2 border-[#868ca0]">
    <label for="all">查看所有数据</label>
  </div>
</main>
</div>
</div>
</body>
</html>
